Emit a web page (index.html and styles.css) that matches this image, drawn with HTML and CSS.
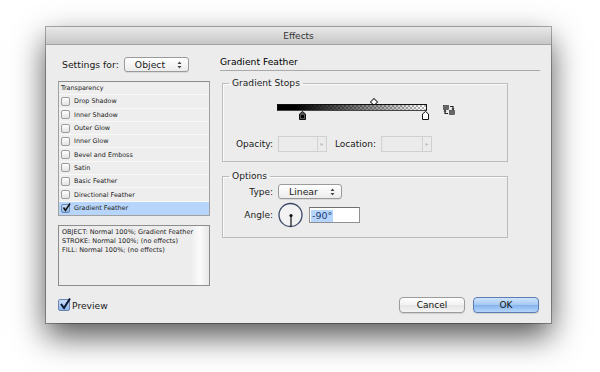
FILE: index.html
```html
<!DOCTYPE html>
<html>
	<head>
		<title>Effects</title>
		<link rel="stylesheet" href="styles.css">
	</head>
	<body>
	<div class="stage">
	  <div class="dialog">
		<div class="titlebar">Effects</div>
		<div class="dialog-body">
		  <div class="panes">
			<div class="left">
			  <div class="settings-row">
				<span>Settings for:</span>
				<div class="select select-object">Object
				  <svg class="updown" width="5" height="8" viewBox="0 0 5 8"><path d="M0.5 3 L2.5 0.5 L4.5 3 Z M0.5 5 L2.5 7.5 L4.5 5 Z" fill="#444"/></svg>
				</div>
			  </div>
			  <ul class="effect-list">
				<li class="plain">Transparency</li>
				<li><span class="box"></span>Drop Shadow</li>
				<li><span class="box"></span>Inner Shadow</li>
				<li><span class="box"></span>Outer Glow</li>
				<li><span class="box"></span>Inner Glow</li>
				<li><span class="box"></span>Bevel and Emboss</li>
				<li><span class="box"></span>Satin</li>
				<li><span class="box"></span>Basic Feather</li>
				<li><span class="box"></span>Directional Feather</li>
				<li class="selected"><span class="box checked"><svg width="9" height="9" viewBox="0 0 9 9"><path d="M1.5 4.5 L3.5 7.5 L8 0.5" fill="none" stroke="#111" stroke-width="1.5"/></svg></span>Gradient Feather</li>
			  </ul>
			  <div class="summary">
				<p>OBJECT: Normal 100%; Gradient Feather</p>
				<p>STROKE: Normal 100%; (no effects)</p>
				<p>FILL: Normal 100%; (no effects)</p>
			  </div>
			</div>
			<div class="right">
			  <h2 class="pane-title">Gradient Feather</h2>
			  <fieldset class="group stops">
				<legend>Gradient Stops</legend>
				<div class="ramp-row">
				  <div class="ramp">
					<span class="midpoint"></span>
					<div class="ramp-bar"></div>
					<svg class="stop" style="left:22px" width="7" height="9" viewBox="0 0 7 9"><path d="M3.5 0.5 L6.5 3 L6.5 8.5 L0.5 8.5 L0.5 3 Z" fill="#555" stroke="#111"/><rect x="2" y="4" width="3" height="3" fill="#000"/></svg>
					<svg class="stop" style="left:145px" width="7" height="9" viewBox="0 0 7 9"><path d="M3.5 0.5 L6.5 3 L6.5 8.5 L0.5 8.5 L0.5 3 Z" fill="#fff" stroke="#111"/></svg>
				  </div>
				  <svg class="swap" width="12" height="10" viewBox="0 0 12 10">
					<rect x="0.5" y="0.5" width="5" height="4" fill="#666" stroke="#333" stroke-width="0.6"/>
					<path d="M7 1.5 H10 V4.5" fill="none" stroke="#222" stroke-width="1.2"/>
					<path d="M8.5 3.5 L10 5.5 L11.5 3.5 Z" fill="#222"/>
					<rect x="6.5" y="5.5" width="5" height="4" fill="#666" stroke="#333" stroke-width="0.6"/>
					<path d="M5 8.5 H2 V5.5" fill="none" stroke="#222" stroke-width="1.2"/>
					<path d="M0.5 6.5 L2 4.5 L3.5 6.5 Z" fill="#222"/>
				  </svg>
				</div>
				<div class="field-row">
				  <span class="label">Opacity:</span>
				  <div class="spin"><span class="spin-box"></span><span class="spin-arrow">&#9656;</span></div>
				  <span class="label-inline">Location:</span>
				  <div class="spin spin-wide"><span class="spin-box"></span><span class="spin-arrow">&#9656;</span></div>
				</div>
			  </fieldset>
			  <fieldset class="group options">
				<legend>Options</legend>
				<div class="field-row type-row">
				  <span class="label">Type:</span>
				  <div class="select select-type">Linear
					<svg class="updown" width="5" height="8" viewBox="0 0 5 8"><path d="M0.5 3 L2.5 0.5 L4.5 3 Z M0.5 5 L2.5 7.5 L4.5 5 Z" fill="#444"/></svg>
				  </div>
				</div>
				<div class="field-row angle-row">
				  <span class="label">Angle:</span>
				  <svg class="dial" width="25" height="26" viewBox="0 0 25 26">
					<circle cx="12.5" cy="13" r="11.5" fill="#f2f2f2" stroke="#3b4866" stroke-width="1.3"/>
					<line x1="13" y1="13.5" x2="13" y2="24.5" stroke="#111" stroke-width="1.2"/>
					<circle cx="13" cy="13.5" r="1.6" fill="#111"/>
				  </svg>
				  <div class="text-input"><span class="sel">-90°</span></div>
				</div>
			  </fieldset>
			</div>
		  </div>
		  <div class="footer">
			<label class="preview"><span class="box big checked"><svg width="12" height="12" viewBox="0 0 12 12"><path d="M2 6 L5 10 L11 0.5" fill="none" stroke="#0d1a33" stroke-width="2"/></svg></span>Preview</label>
			<div class="buttons">
			  <div class="button">Cancel</div>
			  <div class="button default">OK</div>
			</div>
		  </div>
		</div>
	  </div>
	</div>
	</body>
</html>
```

FILE: styles.css
```css
html, body{
	margin:0;
	background-color:#ffffff;
}
body{
	font-family:"DejaVu Sans", sans-serif;
	font-size:9px;
	color:#1a1a1a;
}
.stage{
	width:600px;
	height:372px;
	padding:27px 0 0 46px;
	box-sizing:border-box;
	overflow:hidden;
}
.dialog{
	width:505px;
	height:296px;
	background-color:#ececec;
	box-shadow:0 0 0 1px rgba(0,0,0,0.3), 0 13px 30px rgba(0,0,0,0.68);
	display:flex;
	flex-direction:column;
}
.titlebar{
	height:17px;
	line-height:18px;
	text-align:center;
	color:#333333;
	background:linear-gradient(#e8e8e8, #c7c7c7);
	border-bottom:1px solid #a2a2a2;
}
.dialog-body{
	flex:1;
	display:flex;
	flex-direction:column;
	padding:12px 11px 10px 12px;
}
.panes{
	flex:1;
	display:grid;
	grid-template-columns:152px 1fr;
	column-gap:10px;
}

/* left column */
.settings-row{
	display:flex;
	align-items:center;
	height:14px;
	padding-left:4px;
	font-size:9.3px;
}
.settings-row > span{
	margin-right:5px;
}
.select{
	position:relative;
	height:13px;
	line-height:13px;
	border:1px solid #9a9a9a;
	border-radius:3px;
	background:linear-gradient(#ffffff, #ececec);
	box-shadow:0 1px 0 rgba(0,0,0,0.08);
	box-sizing:content-box;
	padding-left:10px;
	font-size:9.3px;
}
.select-object{
	width:53px;
}
.select .updown{
	position:absolute;
	right:6px;
	top:3px;
}
.effect-list{
	list-style:none;
	margin:10px 0 0 0;
	padding:0;
	border:1px solid #a0a0a0;
	border-top-color:#8c8c8c;
	background-color:#eeeeee;
}
.effect-list li{
	height:13.3px;
	box-sizing:border-box;
	border-bottom:1px solid #f9f9f9;
	display:flex;
	align-items:center;
	padding-left:2px;
	font-size:6.4px;
	color:#222;
}
.effect-list li:last-child{
	border-bottom:0;
}
.effect-list li.selected{
	background-color:#b7d5fa;
}
.box{
	width:7px;
	height:7px;
	border:1px solid #9d9d9d;
	border-radius:2px;
	background:linear-gradient(#ffffff, #e2e2e2);
	margin-right:4px;
	position:relative;
	flex:none;
}
.box svg{
	position:absolute;
	left:0;
	top:-2px;
}
.box.checked{
	background:linear-gradient(#c9defa, #8fb6e8);
	border-color:#6a86b0;
}
.box.big{
	width:10px;
	height:10px;
	border-radius:2px;
	margin-right:2px;
}
.summary{
	margin-top:9px;
	height:55px;
	border:1px solid #8d8d8d;
	background:linear-gradient(to right, #ededed 88%, #fbfbfb 94%, #e6e6e6 100%);
	padding:2px 3px;
	font-size:6.5px;
	color:#222;
}
.summary p{
	margin:0;
	line-height:9px;
}

/* right column */
.pane-title{
	margin:0;
	font-size:9.2px;
	font-weight:normal;
	line-height:10px;
	padding-bottom:3px;
	border-bottom:1px solid #a9a9a9;
	color:#000;
}
.group{
	margin:7px 32px 0 2px;
	padding:0 0 9px 0;
	border:1px solid #bcbcbc;
	box-shadow:inset 1px 1px 0 #fafafa;
}
.group legend{
	margin-left:6px;
	padding:0 3px;
	line-height:11px;
	font-size:9.1px;
}
.options{
	margin-top:9px;
}
.ramp-row{
	display:flex;
	margin-top:10px;
	padding-left:54px;
}
.ramp{
	position:relative;
	width:150px;
	height:22px;
}
.ramp-bar{
	position:absolute;
	left:0;
	top:5px;
	width:150px;
	height:7px;
	box-sizing:border-box;
	border:1px solid #111;
	border-bottom-color:#444;
	background:linear-gradient(to right, #000 0%, #000 12%, rgba(0,0,0,0) 100%),
		repeating-conic-gradient(#b4b4b4 0 25%, #ffffff 0 50%) 0 0/4px 4px;
}
.midpoint{
	position:absolute;
	left:94px;
	top:0;
	width:4px;
	height:4px;
	background-color:#fff;
	border:1px solid #333;
	transform:rotate(45deg);
}
.stop{
	position:absolute;
	top:12px;
}
.swap{
	margin:6px 0 0 16px;
}
.field-row{
	display:flex;
	align-items:center;
}
.stops .field-row{
	margin-top:15px;
	height:16px;
}
.label{
	width:50px;
	text-align:right;
	margin-right:5px;
	flex:none;
}
.label-inline{
	margin:0 5px 0 8px;
}
.spin{
	display:flex;
	width:49px;
	height:16px;
	box-sizing:border-box;
	border:1px solid #d0d0d0;
	background-color:#ebebeb;
}
.spin-wide{
	width:51px;
}
.spin-box{
	flex:1;
}
.spin-arrow{
	width:8px;
	border-left:1px solid #d3d3d3;
	color:#bdbdbd;
	font-size:6px;
	line-height:14px;
	text-align:center;
}
.type-row{
	margin-top:2px;
	height:15px;
}
.select-type{
	width:52px;
	height:13px;
	line-height:13px;
	padding-left:10px;
}
.angle-row{
	margin-top:3px;
	height:26px;
}
.dial{
	margin-right:6px;
}
.text-input{
	width:51px;
	height:16px;
	box-sizing:border-box;
	border:1px solid #8f8f8f;
	border-top-color:#6f6f6f;
	background-color:#ffffff;
	padding:1px 1px;
	font-size:9.5px;
	line-height:13px;
}
.text-input .sel{
	background-color:#b5d5fd;
	color:#223a6a;
	padding:0 1px;
	display:inline-block;
	line-height:12px;
}

/* footer */
.footer{
	display:flex;
	align-items:center;
	justify-content:space-between;
	height:16px;
}
.preview{
	display:flex;
	align-items:center;
	font-size:9.2px;
}
.buttons{
	display:flex;
	gap:8px;
	margin-right:1px;
}
.button{
	width:66px;
	height:16px;
	box-sizing:border-box;
	border:1px solid #9b9b9b;
	border-radius:4px;
	background:linear-gradient(#ffffff, #f1f1f1 50%, #e4e4e4 51%, #f4f4f4);
	text-align:center;
	line-height:14px;
	font-size:9px;
	color:#111;
	box-shadow:0 1px 1px rgba(0,0,0,0.12);
}
.button.default{
	border-color:#5b7eb2;
	background:linear-gradient(#cfe3fb, #a4c8f3 50%, #84b3ee 51%, #b6d6fa);
}
```
